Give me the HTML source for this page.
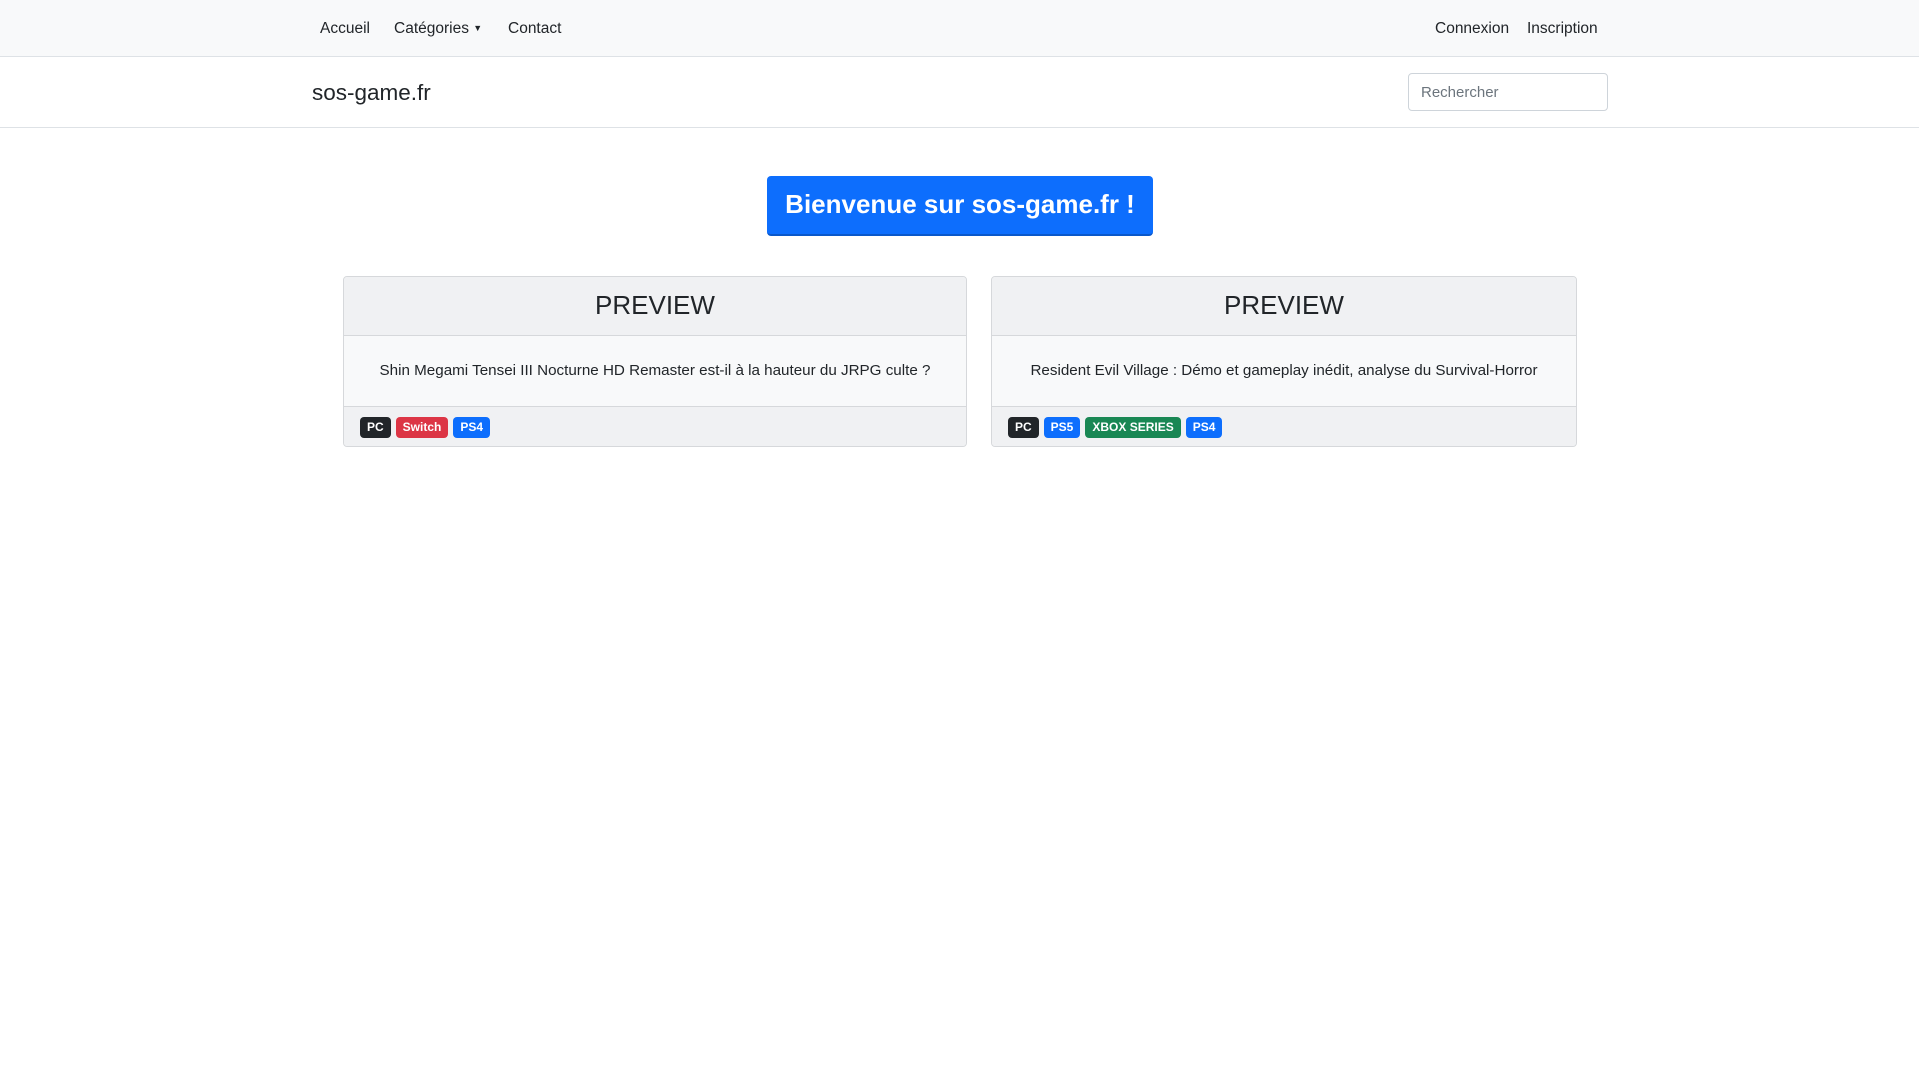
<!DOCTYPE html>
<html><head><meta charset="utf-8"><style>
*{box-sizing:border-box;margin:0;padding:0}
body{width:1919px;height:1079px;background:#fff;font-family:"Liberation Sans",sans-serif;color:#212529;position:relative;overflow:hidden}
.a{position:absolute;white-space:nowrap}
.nav{position:absolute;left:0;top:0;width:1919px;height:57px;background:#f8f9fa;border-bottom:1px solid #dee2e6}
.nl{font-size:15.5px;color:#212529;top:20px}
.hdr{position:absolute;left:0;top:57px;width:1919px;height:71px;border-bottom:1px solid #dee2e6}
.btn{position:absolute;left:767px;top:176px;width:386px;height:60px;background:#0d6efd;border-radius:4px;color:#fff;font-weight:bold;font-size:26px;text-align:center;line-height:56px;border-bottom:2px solid #0a58ca}
.card{position:absolute;top:276px;height:171px;border:1px solid #d6d8db;border-radius:4px;overflow:hidden;background:#f8f9fa}
.ch{height:59px;background:#f0f1f3;border-bottom:1px solid #d6d8db;text-align:center;font-size:26px;line-height:56px}
.cb{height:71px;text-align:center;font-size:15.2px;line-height:70px;border-bottom:1px solid #d6d8db}
.cf{height:41px;background:#f0f1f3;padding:10px 0 0 16px}
.b{display:inline-block;height:21px;line-height:21px;padding:0 7px;border-radius:4px;color:#fff;font-weight:bold;font-size:12px;margin-right:5px}
</style></head><body>
<div class="nav">
<span class="a nl" style="left:320px">Accueil</span>
<span class="a nl" style="left:394px">Catégories <span style="font-size:9px;vertical-align:2px">▼</span></span>
<span class="a nl" style="left:508px">Contact</span>
<span class="a nl" style="left:1435px">Connexion</span>
<span class="a nl" style="left:1527px">Inscription</span>
</div>
<div class="hdr">
<span class="a" style="left:312px;top:23px;font-size:22.5px">sos-game.fr</span>
<div class="a" style="left:1408px;top:16px;width:200px;height:38px;border:1px solid #ced4da;border-radius:4px;font-size:15px;color:#6c757d;padding:10px 12px">Rechercher</div>
</div>
<div class="btn">Bienvenue sur sos-game.fr !</div>
<div class="card" style="left:343px;width:624px">
<div class="ch">PREVIEW</div>
<div class="cb">Shin Megami Tensei III Nocturne HD Remaster est-il à la hauteur du JRPG culte ?</div>
<div class="cf"><span class="b" style="background:#212529">PC</span><span class="b" style="background:#dc3545">Switch</span><span class="b" style="background:#0d6efd">PS4</span></div>
</div>
<div class="card" style="left:991px;width:586px">
<div class="ch">PREVIEW</div>
<div class="cb">Resident Evil Village : Démo et gameplay inédit, analyse du Survival-Horror</div>
<div class="cf"><span class="b" style="background:#212529">PC</span><span class="b" style="background:#0d6efd">PS5</span><span class="b" style="background:#198754">XBOX SERIES</span><span class="b" style="background:#0d6efd">PS4</span></div>
</div>
</body></html>
